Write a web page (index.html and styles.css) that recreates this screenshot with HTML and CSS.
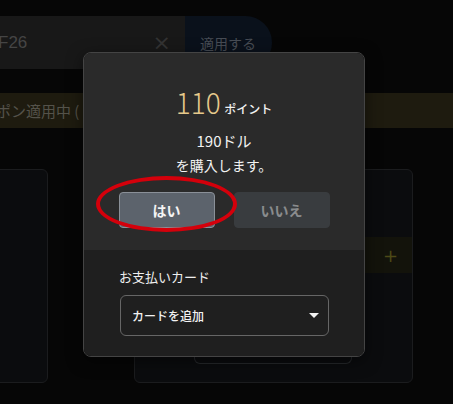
FILE: index.html
```html
<!DOCTYPE html>
<html lang="ja">
<head>
    <meta charset="UTF-8">
    <meta name="viewport" content="width=device-width, initial-scale=1.0">
    <title>ポイント購入</title>
    <link rel="stylesheet" href="styles.css">
</head>
<body>
<div class="page">
    <div class="coupon-row">
        <div class="coupon-input">
            <span class="coupon-code">F26</span>
            <span class="coupon-clear">&times;</span>
        </div>
        <div class="coupon-apply">適用する</div>
    </div>

    <div class="coupon-banner">ポン適用中 (</div>

    <div class="cards">
        <div class="card card-left"></div>
        <div class="card card-right">
            <div class="card-strip"><span class="card-plus">+</span></div>
            <div class="card-inner"></div>
        </div>
    </div>
</div>

<div class="modal">
    <div class="modal-top">
        <div class="amount"><span class="amount-num">110</span> <span class="amount-unit">ポイント</span></div>
        <div class="price">190ドル</div>
        <div class="confirm">を購入します。</div>
        <div class="actions">
            <button class="btn btn-yes">はい</button>
            <button class="btn btn-no">いいえ</button>
        </div>
    </div>
    <div class="modal-bottom">
        <div class="pay-label">お支払いカード</div>
        <div class="pay-select">
            <span>カードを追加</span>
            <span class="caret"></span>
        </div>
    </div>
</div>

<div class="highlight"></div>
</body>
</html>
```

FILE: styles.css
```css
body {
    margin: 0;
    background-color: #060606;
    font-family: "Noto Sans CJK JP", "Noto Sans", sans-serif;
    width: 453px;
    height: 404px;
    overflow: hidden;
    position: relative;
}

.page {
    padding-top: 16px;
}

.coupon-row {
    display: flex;
    height: 53px;
}

.coupon-input {
    width: 185px;
    background-color: #181818;
    display: flex;
    align-items: center;
    justify-content: space-between;
}

.coupon-code {
    margin-left: -2px;
    font-family: "Liberation Sans", sans-serif;
    font-size: 17px;
    color: #454545;
}

.coupon-clear {
    margin-right: 14px;
    font-size: 22px;
    color: #333;
    font-family: "DejaVu Sans", sans-serif;
}

.coupon-apply {
    width: 87px;
    background-color: #0a111b;
    border-radius: 0 27px 27px 0;
    color: #474c54;
    font-size: 14px;
    display: flex;
    align-items: center;
    padding-left: 15px;
    box-sizing: border-box;
}

.coupon-banner {
    margin-top: 24px;
    height: 35px;
    background-color: #1e1b0f;
    color: #54524a;
    font-size: 15px;
    display: flex;
    align-items: center;
    text-indent: -4px;
}

.cards {
    margin-top: 41px;
    display: flex;
    gap: 86px;
    height: 214px;
}

.card {
    border: 1px solid #1b1c1e;
    border-radius: 6px;
    background-color: #0b0c0e;
    box-sizing: border-box;
}

.card-left {
    width: 56px;
    margin-left: -8px;
}

.card-right {
    width: 279px;
    display: flex;
    flex-direction: column;
}

.card-strip {
    margin-top: 67px;
    height: 36px;
    background-color: #13130b;
    display: flex;
    align-items: center;
    justify-content: flex-end;
    padding-right: 14px;
}

.card-plus {
    color: #4d4a17;
    font-size: 18px;
    font-family: "DejaVu Sans", sans-serif;
}

.card-inner {
    margin: auto 60px 18px 59px;
    height: 20px;
    border: 1px solid #26282b;
    border-top: none;
    border-radius: 0 0 6px 6px;
}

.modal {
    position: absolute;
    left: 83px;
    top: 52px;
    width: 282px;
    height: 305px;
    border: 1px solid #444;
    border-radius: 8px;
    overflow: hidden;
    box-sizing: border-box;
    display: flex;
    flex-direction: column;
    box-shadow: 0 4px 16px rgba(0, 0, 0, 0.5);
}

.modal-top {
    height: 197px;
    background-color: #2a2a2a;
    text-align: center;
    padding-top: 29px;
    box-sizing: border-box;
}

.amount {
    line-height: 40px;
    color: #f2f2f2;
}

.amount-num {
    font-size: 28px;
    color: #e6c98c;
    font-weight: 300;
}

.amount-unit {
    font-size: 12px;
    font-weight: 500;
}

.price {
    line-height: 24px;
    font-size: 15px;
    color: #f2f2f2;
}

.confirm {
    line-height: 24px;
    font-size: 14px;
    color: #f2f2f2;
}

.actions {
    margin-top: 15px;
    display: flex;
    justify-content: center;
    gap: 19px;
}

.btn {
    width: 96px;
    height: 36px;
    border-radius: 4px;
    font-family: "Noto Sans CJK JP", sans-serif;
    font-size: 14px;
    font-weight: bold;
    box-sizing: border-box;
}

.btn-yes {
    background-color: #5c636c;
    border: 1px solid #8a9098;
    color: #f4f4f4;
}

.btn-no {
    background-color: #393c3f;
    border: 1px solid #393c3f;
    color: #8a8c8e;
}

.modal-bottom {
    flex: 1;
    background-color: #1f1f1f;
    padding: 17px 35px 0 35px;
}

.pay-label {
    font-size: 13px;
    color: #eeeeee;
    line-height: 20px;
}

.pay-select {
    margin-top: 8px;
    margin-left: 1px;
    height: 41px;
    border: 1px solid #666;
    border-radius: 6px;
    display: flex;
    align-items: center;
    justify-content: space-between;
    padding: 0 9px 0 11px;
    box-sizing: border-box;
    font-size: 12px;
    font-weight: 500;
    color: #f2f2f2;
}

.caret {
    width: 0;
    height: 0;
    border-left: 5px solid transparent;
    border-right: 5px solid transparent;
    border-top: 5px solid #f2f2f2;
}

.highlight {
    position: absolute;
    left: 96px;
    top: 176px;
    width: 133px;
    height: 48px;
    border: 4px solid #d4000b;
    border-radius: 50%;
}
```
